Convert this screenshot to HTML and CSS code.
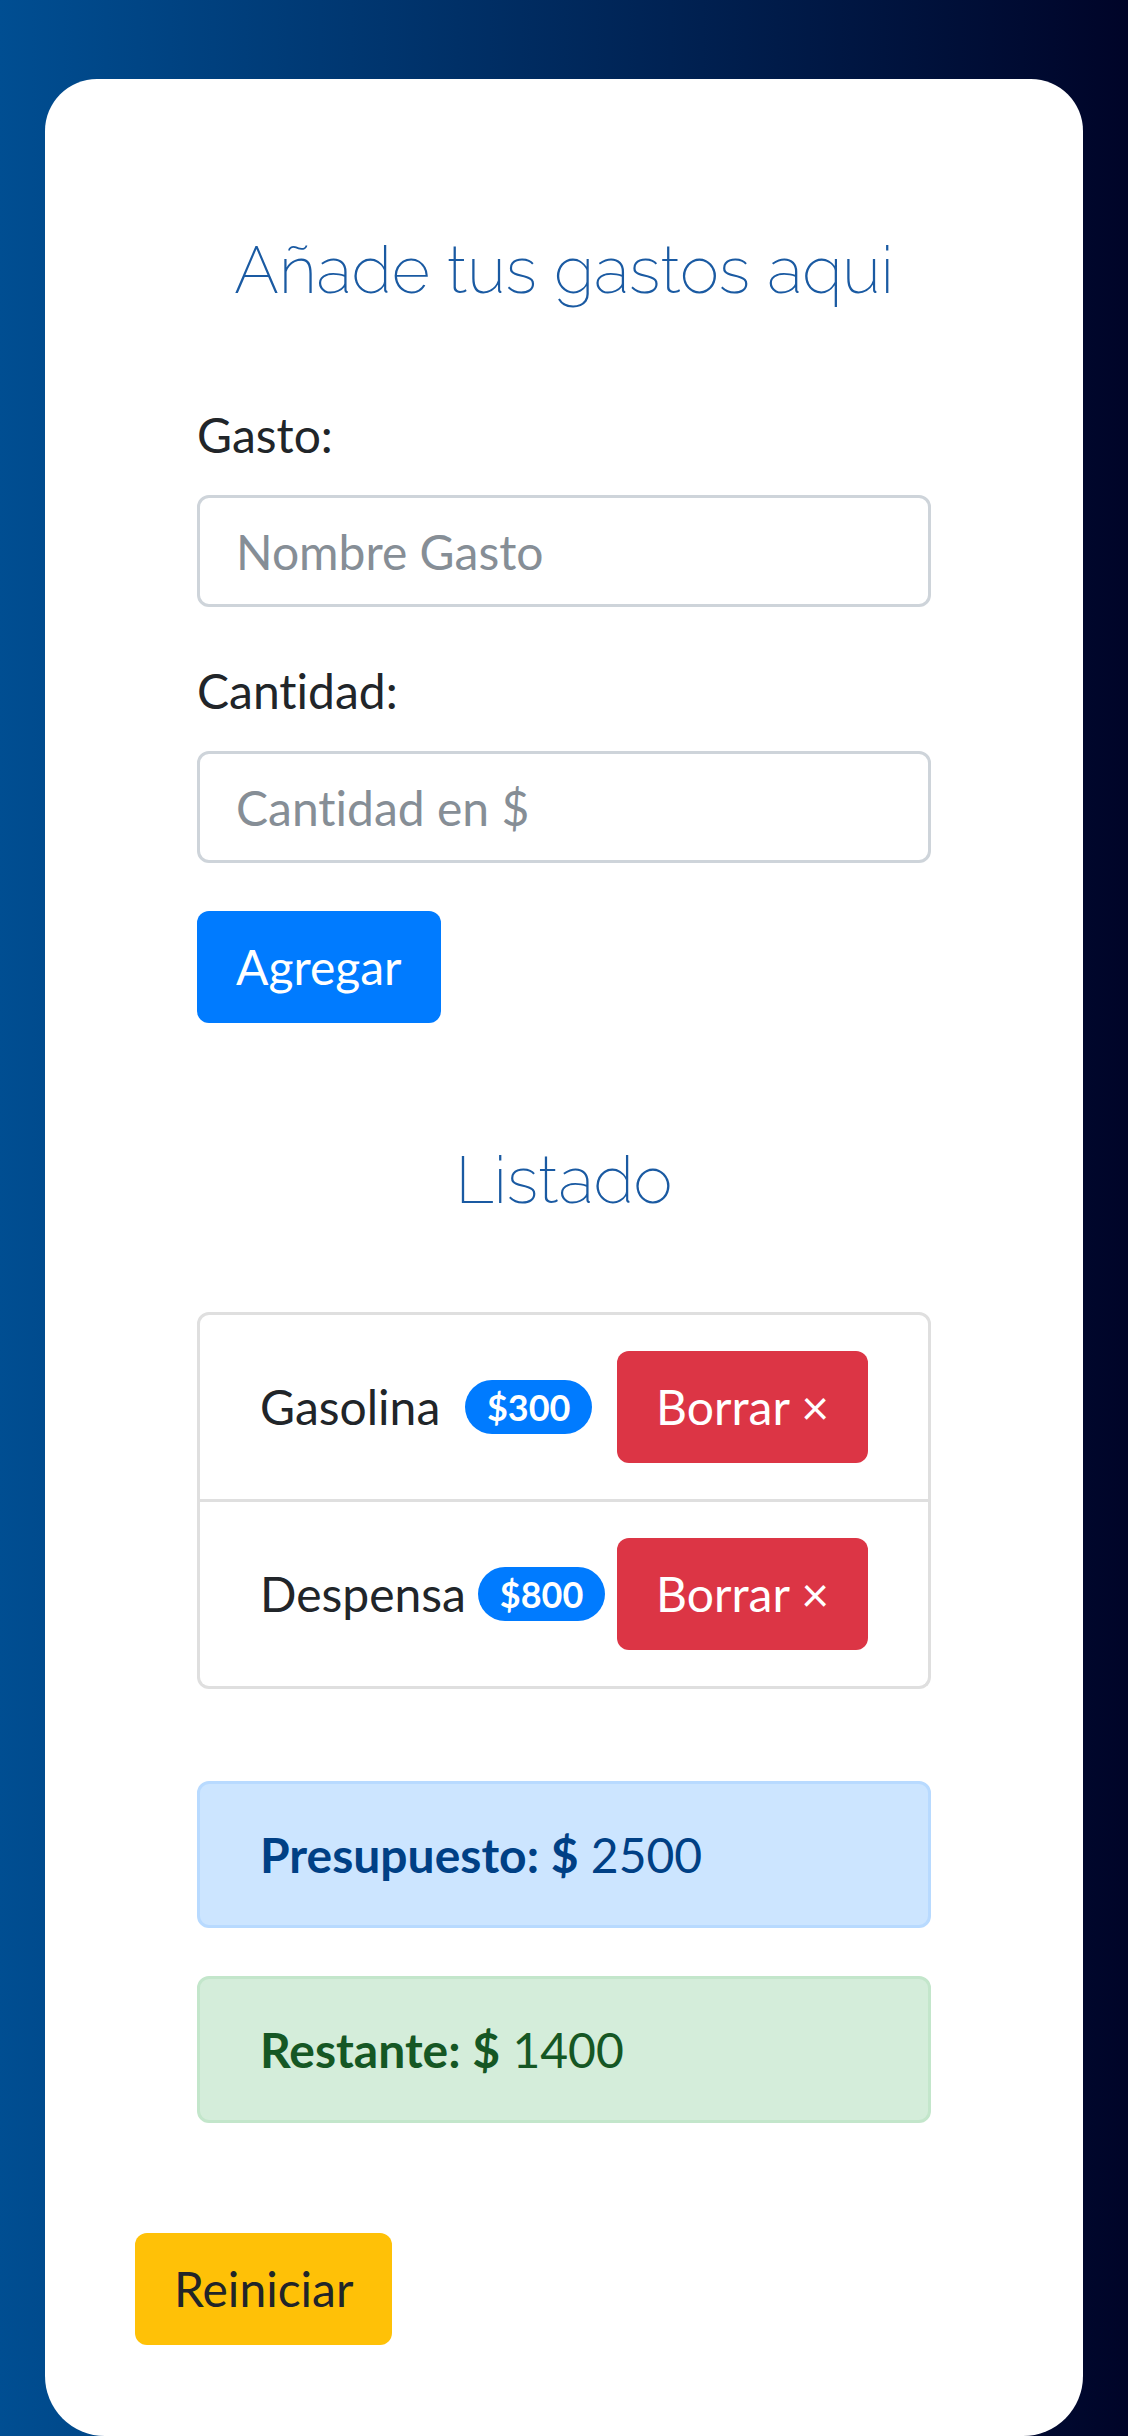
FILE: index.html
```html
<!DOCTYPE html>
<html lang="es">
    <head>
        <meta charset="utf-8">
        <title>Gasto Semanal</title>
        <meta name="viewport" content="width=device-width, initial-scale=1.0">
        <link rel="stylesheet" href="styles.css">
    </head>
    <body>
        <div class="card">
            <h2 class="title">Añade tus gastos aqui</h2>
            <form class="form" onsubmit="return false">
                <div class="field">
                    <label for="gasto">Gasto:</label>
                    <input type="text" id="gasto" class="control" placeholder="Nombre Gasto">
                </div>
                <div class="field">
                    <label for="cantidad">Cantidad:</label>
                    <input type="number" id="cantidad" class="control" placeholder="Cantidad en $">
                </div>
                <button type="submit" class="btn btn-primary">Agregar</button>
            </form>

            <h2 class="title listado">Listado</h2>
            <ul class="list">
                <li class="item">
                    <span>Gasolina</span>
                    <span class="badge">$300</span>
                    <button class="btn btn-danger">Borrar &times;</button>
                </li>
                <li class="item">
                    <span>Despensa</span>
                    <span class="badge">$800</span>
                    <button class="btn btn-danger">Borrar &times;</button>
                </li>
            </ul>

            <div class="alert alert-primary"><b>Presupuesto: $</b> 2500</div>
            <div class="alert alert-success"><b>Restante: $</b> 1400</div>

            <button class="btn btn-warning reset">Reiniciar</button>
        </div>
    </body>
</html>
```

FILE: styles.css
```css
* {
    box-sizing: border-box;
}

body {
    margin: 0;
    min-height: 2436px;
    background: linear-gradient(to right, #004e92, #000428);
    color: #212529;
    font-family: "Lato", "Noto Sans", sans-serif;
    font-size: 48px;
    line-height: 72px;
    font-variant-ligatures: none;
}

.card {
    margin: 79px 45px 0 45px;
    min-height: 2357px;
    padding-top: 151px;
    background: white;
    border-radius: 52px 52px 60px 60px;
}

.title {
    margin: 0 0 89px 0;
    font-family: "Raleway", "Lato", sans-serif;
    font-weight: 200;
    font-size: 66px;
    line-height: 80px;
    color: #1a5aa2;
    text-align: center;
}

.listado {
    margin-top: 117px;
    margin-bottom: 92px;
}

.form,
.list,
.alert {
    width: 734px;
    margin-left: auto;
    margin-right: auto;
}

.field {
    margin-bottom: 48px;
}

.field > label {
    display: block;
    margin-bottom: 24px;
}

.control {
    display: block;
    width: 100%;
    height: 112px;
    padding: 17px 36px;
    font: inherit;
    color: #495057;
    background: white;
    border: 3px solid #ced4da;
    border-radius: 12px;
    outline: 0;
    -moz-appearance: textfield;
}

.control::placeholder {
    color: #868e96;
}

.control::-webkit-outer-spin-button,
.control::-webkit-inner-spin-button {
    -webkit-appearance: none;
    margin: 0;
}

.btn {
    display: inline-block;
    padding: 17px 36px;
    font: inherit;
    border: 3px solid transparent;
    border-radius: 12px;
    cursor: pointer;
}

.btn-primary {
    background: #007bff;
    color: white;
}

.btn-danger {
    background: #dc3545;
    color: white;
}

.btn-warning {
    background: #ffc107;
    color: #212529;
}

.list {
    margin-top: 0;
    margin-bottom: 92px;
    padding: 0;
    list-style: none;
}

.item {
    display: flex;
    align-items: center;
    justify-content: space-between;
    padding: 36px 60px;
    border: 3px solid #dfdfdf;
}

.item:first-child {
    border-radius: 12px 12px 0 0;
}

.item:last-child {
    border-radius: 0 0 12px 12px;
}

.item + .item {
    border-top-width: 0;
}

.badge {
    padding: 9px 22px;
    font-size: 36px;
    font-weight: 700;
    line-height: 36px;
    color: white;
    background: #007bff;
    border-radius: 480px;
}

.alert {
    margin-top: 0;
    margin-bottom: 48px;
    padding: 35px 60px 34px 60px;
    border: 3px solid transparent;
    border-radius: 12px;
}

.alert-primary {
    color: #004085;
    background: #cce5ff;
    border-color: #b8daff;
}

.alert-success {
    color: #155724;
    background: #d4edda;
    border-color: #c3e6cb;
}

.reset {
    display: block;
    margin: 110px 0 0 90px;
}
```
